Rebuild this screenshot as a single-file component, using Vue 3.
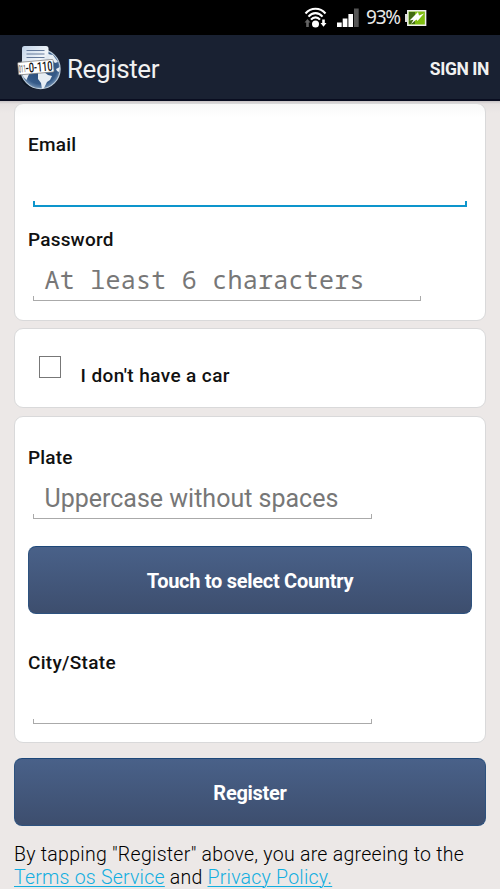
<script setup>
const form = {
  password: 'At least 6 characters',
  plate: 'Uppercase without spaces',
}
</script>

<template>
  <div class="screen">
    <div class="status">
      <svg class="wifi" width="24" height="22" viewBox="0 0 24 22">
        <g fill="none" stroke="#fff" stroke-width="2.1">
          <path d="M1.500 6.500C7 .2 16 .2 21.500 6.500" />
          <path d="M4.500 9.600C8.500 5 14.500 5 18.500 9.600" />
          <path d="M7 12.600C9.500 9.600 13.500 9.600 16 12.600" />
        </g>
        <circle cx="11.500" cy="17" r="3.500" fill="#fff" />
        <path d="M3.500 12l3 3.500H4.800V20H2.200v-4.500H.5z" fill="#666" />
        <path d="M18.200 12.500h2.600V16h1.700l-3 3.700-3-3.700h1.700z" fill="#fff" />
      </svg>
      <svg class="signal" width="23" height="20" viewBox="0 0 23 20">
        <path d="M0 14.500h4.700V19H0zM5.700 10.500h4.700V19H5.700zM11.400 6h4.600v13h-4.600z" fill="#fff" />
        <path d="M17 .5h4.700V19H17z" fill="#555" />
      </svg>
      <span class="percent">93%</span>
      <svg class="battery" width="22" height="16" viewBox="0 0 22 16">
        <path d="M0 4h2v8H0z" fill="#ddd" />
        <path d="M2.800.8h17.800v14.400H2.800z" fill="#7fbd10" stroke="#eee" stroke-width="1.500" />
        <path d="M4 2h6v12H4z" fill="#426b12" />
        <path d="M13 2L4.500 10.500l4-.8L6 14l5.500-4.500 1 1.500L19 3.500l-5 2z" fill="#fff" />
      </svg>
    </div>

    <header class="bar">
      <svg class="logo" width="46" height="46" viewBox="0 0 46 46">
        <defs>
          <radialGradient id="ocean" cx=".5" cy=".45" r=".6">
            <stop offset="0" stop-color="#234675" />
            <stop offset=".72" stop-color="#365b89" />
            <stop offset="1" stop-color="#8daac8" />
          </radialGradient>
          <linearGradient id="sheet" x2="1" y2="1">
            <stop offset="0" stop-color="#c1d3e8" />
            <stop offset=".6" stop-color="#f1f5f9" />
            <stop offset="1" stop-color="#b7c9df" />
          </linearGradient>
        </defs>
        <ellipse cx="20" cy="28" rx="18" ry="17" fill="#0d1623" />
        <circle cx="23.500" cy="25" r="19.600" fill="url(#ocean)" stroke="#b9cada" stroke-width="1.200" />
        <path d="M31 10l5 1 5 7-3 1-2-2-4 2-3-3zM4.500 28l8 1-3 7-3-3zM21 29l6-1 4 3 4 1-2 4-3 2-3 6-2 1-1-6-3-4zM39 25l4-2-1 5-2-1z" fill="#e7edf3" />
        <rect x="5" y="2" width="26.500" height="24" rx="2.500" fill="url(#sheet)" />
        <path d="M9.500 6.500h18M9.500 10h18M9.500 13.500h18" stroke="#647a9c" stroke-width="1.200" />
        <g transform="rotate(-5 18 22)">
          <rect x="1" y="17" width="35.500" height="12.500" rx="1" fill="#fff" stroke="#777" stroke-width=".7" />
          <text x="1.500" y="27.300" font-family="Roboto, sans-serif" font-size="10.500" font-weight="500" fill="#666" textLength="7" lengthAdjust="spacingAndGlyphs">011</text>
          <text x="8.500" y="28" font-family="Roboto, sans-serif" font-size="13.500" font-weight="500" fill="#111" textLength="27" lengthAdjust="spacingAndGlyphs">-0-110</text>
        </g>
      </svg>
      <h1 class="title">Register</h1>
      <span class="signin">SIGN IN</span>
    </header>

    <main class="content">
      <section class="card">
        <div class="label email">Email</div>
        <div class="field active"></div>
        <div class="label password">Password</div>
        <div class="field medium mono"><span>{{ form.password }}</span></div>
      </section>

      <section class="card check">
        <span class="box"></span>
        <span class="label car">I don't have a car</span>
      </section>

      <section class="card">
        <div class="label">Plate</div>
        <div class="field short"><span class="plate">{{ form.plate }}</span></div>
        <div class="button country"><span>Touch to select Country</span></div>
        <div class="label city">City/State</div>
        <div class="field short"></div>
      </section>

      <div class="button submit"><span>Register</span></div>

      <p class="terms">
        <span class="line">By tapping "Register" above, you are agreeing to the</span>
        <span class="line links"><a>Terms os Service</a> and <a>Privacy Policy.</a></span>
      </p>
    </main>
  </div>
</template>

<style>
body {
  background: #ece8e7;
  overflow: hidden;
}
</style>

<style scoped>
* {
  box-sizing: border-box;
}
.screen {
  width: 500px;
  height: 889px;
  overflow: hidden;
  background: #ece8e7;
  font-family: Roboto, "Liberation Sans", sans-serif;
  color: #111;
}
.status {
  display: flex;
  align-items: center;
  height: 35px;
  padding-left: 304px;
  background: #000;
}
.signal {
  margin-left: 9px;
}
.percent {
  width: 34px;
  margin-left: 6px;
  color: #e9e9e9;
  font: 19px/35px "Noto Sans", sans-serif;
  letter-spacing: -1.2px;
  white-space: nowrap;
}
.battery {
  margin-left: 5px;
}
.bar {
  display: flex;
  align-items: center;
  height: 66px;
  padding: 0 11px 0 17px;
  background: #192132;
  border-bottom: 2px solid #090d20;
}
.title {
  margin: 3px 0 0 4px;
  color: #f1f1f1;
  font-size: 26px;
  font-weight: 400;
  line-height: 32px;
  letter-spacing: -0.4px;
}
.signin {
  margin: 3px 0 0 auto;
  color: #f1f1f1;
  font-size: 17.5px;
  font-weight: 700;
  letter-spacing: -0.4px;
}
.content {
  display: flex;
  flex-direction: column;
  gap: 8px;
  padding: 2px 14px 0;
  background: linear-gradient(#c7c3c5, #e5e1e1 3px, #ece8e7 12px);
}
.card {
  padding: 29px 13px 18px;
  border: 1px solid #d9d9da;
  border-radius: 9px;
  background: #fff;
}
.card:first-child {
  padding-bottom: 19px;
  background: linear-gradient(#f8f8f8, #fff 14px);
}
.label {
  height: 24px;
  font-size: 19px;
  font-weight: 500;
  line-height: 24px;
  letter-spacing: 0.2px;
  white-space: nowrap;
}
.password {
  margin-top: 21px;
}
.field {
  display: flex;
  align-items: center;
  height: 49px;
  margin-left: 5px;
  padding: 2px 0 0 11.5px;
  background:
    linear-gradient(#aaa, #aaa) left bottom / 1px 5px no-repeat,
    linear-gradient(#aaa, #aaa) right bottom / 1px 5px no-repeat,
    linear-gradient(#aaa, #aaa) left bottom / 100% 1px no-repeat;
  color: #777;
  font-size: 25px;
  line-height: 32px;
  white-space: nowrap;
}
.active {
  width: 434px;
  height: 50px;
  background:
    linear-gradient(#0d95cc, #0d95cc) left bottom / 2px 6px no-repeat,
    linear-gradient(#0d95cc, #0d95cc) right bottom / 2px 6px no-repeat,
    linear-gradient(#0d95cc, #0d95cc) left bottom / 100% 2px no-repeat;
}
.medium {
  width: 388px;
}
.short {
  width: 339px;
}
.mono {
  padding-top: 4px;
  font-family: "Noto Sans Mono", "DejaVu Sans Mono", monospace;
  font-size: 25px;
  letter-spacing: 0.25px;
}
.plate {
  margin-top: 6px;
}
.card.check {
  display: flex;
  height: 80px;
  margin-top: -1px;
  padding: 27px 0 0 24px;
}
.box {
  width: 22px;
  height: 22px;
  border: 1px solid #777;
}
.car {
  margin: 8px 0 0 19.5px;
  letter-spacing: 0.4px;
}
.button {
  display: flex;
  align-items: center;
  justify-content: center;
  height: 68px;
  border: 1px solid #2d527f;
  border-top-color: #1d4779;
  border-radius: 8px;
  background: linear-gradient(#496189, #3d4e6e);
  color: #fff;
  font-size: 20px;
  font-weight: 700;
  line-height: 24px;
  letter-spacing: -0.28px;
}
.button span {
  margin-top: 2px;
}
.country {
  margin-top: 27px;
}
.city {
  margin-top: 37px;
  letter-spacing: 0.3px;
}
.submit {
  margin-top: 7px;
}
.terms {
  margin: 9px 0 0;
  color: #000;
  font-size: 19.5px;
  font-weight: 300;
  line-height: 23px;
  letter-spacing: 0.27px;
}
.line {
  display: block;
  white-space: nowrap;
}
.links {
  letter-spacing: 0.23px;
}
a {
  color: #12aee0;
  text-decoration: underline;
  text-decoration-thickness: 1px;
  text-underline-offset: 2px;
}
</style>
